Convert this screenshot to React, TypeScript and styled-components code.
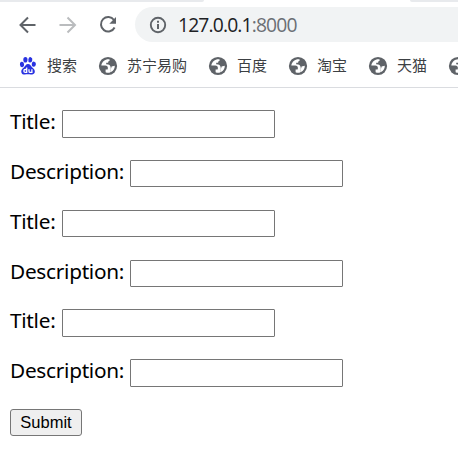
import React from "react";
import styled, { createGlobalStyle } from "styled-components";

const Global = createGlobalStyle`
  *, *::before, *::after { box-sizing: border-box; }
  html, body { margin: 0; background: #fff; overflow: hidden; }
`;

const Page = styled.div`
  width: 458px;
  height: 472px;
  overflow: hidden;
  background: #fff;
`;

const TabStrip = styled.div`
  display: flex;
  justify-content: space-between;
  height: 2px;
`;

const TabEdge = styled.div<{ $side: "left" | "right" }>`
  width: ${(p) => (p.$side === "left" ? 204 : 48)}px;
  background: #e8eaed;
  border-radius: ${(p) => (p.$side === "left" ? "0 0 3px 0" : "0 0 0 3px")};
`;

const Toolbar = styled.div`
  display: flex;
  align-items: center;
  height: 45px;
  padding-left: 16px;
`;

const NavIcon = styled.svg<{ $muted?: boolean }>`
  flex: none;
  width: 24px;
  height: 24px;
  margin-right: 16px;
  fill: none;
  stroke: ${(p) => (p.$muted ? "#babcbe" : "#5f6368")};
  stroke-width: 2;
`;

const AddressBar = styled.div`
  display: flex;
  align-items: center;
  flex: 1;
  height: 35px;
  margin-left: -1px;
  padding-left: 14px;
  border-radius: 18px 0 0 18px;
  background: #f1f3f4;
`;

const InfoIcon = styled.svg`
  flex: none;
  width: 18px;
  height: 18px;
`;

const Url = styled.span`
  margin: -1px 0 0 11px;
  color: #202124;
  font: 19.3px/35px "Open Sans", sans-serif;
  letter-spacing: -0.85px;
  white-space: nowrap;
`;

const Port = styled.span`
  color: #6b6f74;
`;

const Bookmarks = styled.div`
  display: flex;
  align-items: center;
  height: 41px;
  padding: 0 0 3px 18px;
  border-bottom: 1px solid #dadce0;
`;

const Bookmark = styled.div`
  display: flex;
  flex: none;
  align-items: center;
  margin-right: 20px;
`;

const BookmarkIcon = styled.svg`
  width: 20px;
  height: 20px;
  flex: none;
`;

const BookmarkName = styled.span`
  margin: -2px 1px 0 9px;
  color: #3c4043;
  font: 15px/24px "Noto Sans CJK SC", sans-serif;
  white-space: nowrap;
`;

const Form = styled.form`
  display: flex;
  flex-direction: column;
  align-items: flex-start;
  gap: 22.3px;
  padding: 22.2px 0 0 10px;
`;

const Field = styled.label`
  display: flex;
  height: 27.5px;
`;

const FieldName = styled.span<{ $width: number }>`
  width: ${(p) => p.$width}px;
  color: #000;
  font: 20.8px/23px "Noto Sans", sans-serif;
  letter-spacing: -0.28px;
  white-space: nowrap;
`;

const TextInput = styled.input`
  width: 213px;
  height: 27.5px;
  margin: 0;
  padding: 1px 2px;
  border: 1px solid #767676;
  border-radius: 1px;
  outline: none;
  background: #fff;
  font: 16.6px "Liberation Sans", sans-serif;
`;

const SubmitButton = styled.button`
  width: 72px;
  height: 27px;
  padding: 0;
  border: 1px solid #767676;
  border-radius: 3px;
  background: #efefef;
  color: #000;
  font: 16.5px/24px "Liberation Sans", sans-serif;
`;

const Globe = () => (
  <BookmarkIcon viewBox="0 0 20 20">
    <circle cx="10" cy="10" r="9.1" fill="#5f6368" />
    <path
      d="M11.6 3.4C7.5 2.8 4 5.5 3.3 9.4L7.2 9.5C9.1 9.7 10 10.6 9.9 12.2L9.6 13.4H7.6V16.2C8.8 16.8 10.5 17 12 16.4L12.8 13.4C13 11 12.3 8.8 10.3 8.5L8.2 8.3V6.7H10.1C10.3 5.2 10.7 4.8 11.6 4.7Z"
      fill="#fff"
    />
    <path d="M13.6 10.4 16.8 9.8C16.9 12.4 15.4 14.9 13 16L12 16.3 12.8 13.4Z" fill="#fff" />
  </BookmarkIcon>
);

const Paw = () => (
  <BookmarkIcon viewBox="0 0 20 20">
    <g fill="#2932e1">
      <ellipse cx="4" cy="8.5" rx="2.1" ry="2.7" transform="rotate(-12 4 8.5)" />
      <ellipse cx="7.4" cy="3.8" rx="2.1" ry="2.8" />
      <ellipse cx="12.3" cy="3.8" rx="2" ry="2.7" transform="rotate(10 12.3 3.8)" />
      <ellipse cx="15.8" cy="8.2" rx="2.1" ry="2.6" transform="rotate(10 15.8 8.2)" />
      <path d="M10 8C7.8 8 7.4 10 5.8 11.5 4 13 2.8 14.2 3.4 16.4 4 18.8 6.2 18.5 9.8 18.3 13.5 18.5 16.3 18.8 16.8 16.2 17.2 13.8 15.5 12.6 14 11.2 12.6 9.8 12.2 8 10 8Z" />
    </g>
    <path
      d="M8.7 11.5V16.4H7.2C5.4 16.4 5.4 13.5 7.2 13.5H8.7M11 13.2V15.2C11 16.1 11.5 16.4 12.3 16.4H13.9V13.2"
      fill="none"
      stroke="#fff"
      strokeWidth="1.3"
    />
  </BookmarkIcon>
);

const sites = ["苏宁易购", "百度", "淘宝", "天猫", ""];
const fields = [
  { name: "Title:", width: 52 },
  { name: "Description:", width: 120 },
];
const rows = [...fields, ...fields, ...fields];

export default function App() {
  return (
    <Page>
      <Global />
      <TabStrip>
        <TabEdge $side="left" />
        <TabEdge $side="right" />
      </TabStrip>
      <Toolbar>
        <NavIcon viewBox="0 0 24 24">
          <path d="M19.5 12H5M12 4.5 4.5 12 12 19.5" />
        </NavIcon>
        <NavIcon viewBox="0 0 24 24" $muted>
          <path d="M3.5 12H18M11.5 4.5 19 12 11.5 19.5" />
        </NavIcon>
        <NavIcon viewBox="0 0 24 24">
          <path d="M18 7A7.2 7.2 0 1 0 18.6 14.5" />
          <path d="M20 4V10.7H13.3Z" fill="#5f6368" stroke="none" />
        </NavIcon>
        <AddressBar>
          <InfoIcon viewBox="0 0 18 18">
            <circle cx="9" cy="9" r="7.2" fill="none" stroke="#5f6368" strokeWidth="1.9" />
            <path d="M8 8h2v5H8zM8 4.8h2v1.9H8z" fill="#5f6368" />
          </InfoIcon>
          <Url>
            127.0.0.1<Port>:8000</Port>
          </Url>
        </AddressBar>
      </Toolbar>
      <Bookmarks>
        <Bookmark>
          <Paw />
          <BookmarkName>搜索</BookmarkName>
        </Bookmark>
        {sites.map((site, i) => (
          <Bookmark key={i}>
            <Globe />
            <BookmarkName>{site}</BookmarkName>
          </Bookmark>
        ))}
      </Bookmarks>
      <Form onSubmit={(e) => e.preventDefault()}>
        {rows.map((field, i) => (
          <Field key={i}>
            <FieldName $width={field.width}>{field.name}</FieldName>
            <TextInput type="text" />
          </Field>
        ))}
        <SubmitButton type="submit">Submit</SubmitButton>
      </Form>
    </Page>
  );
}
